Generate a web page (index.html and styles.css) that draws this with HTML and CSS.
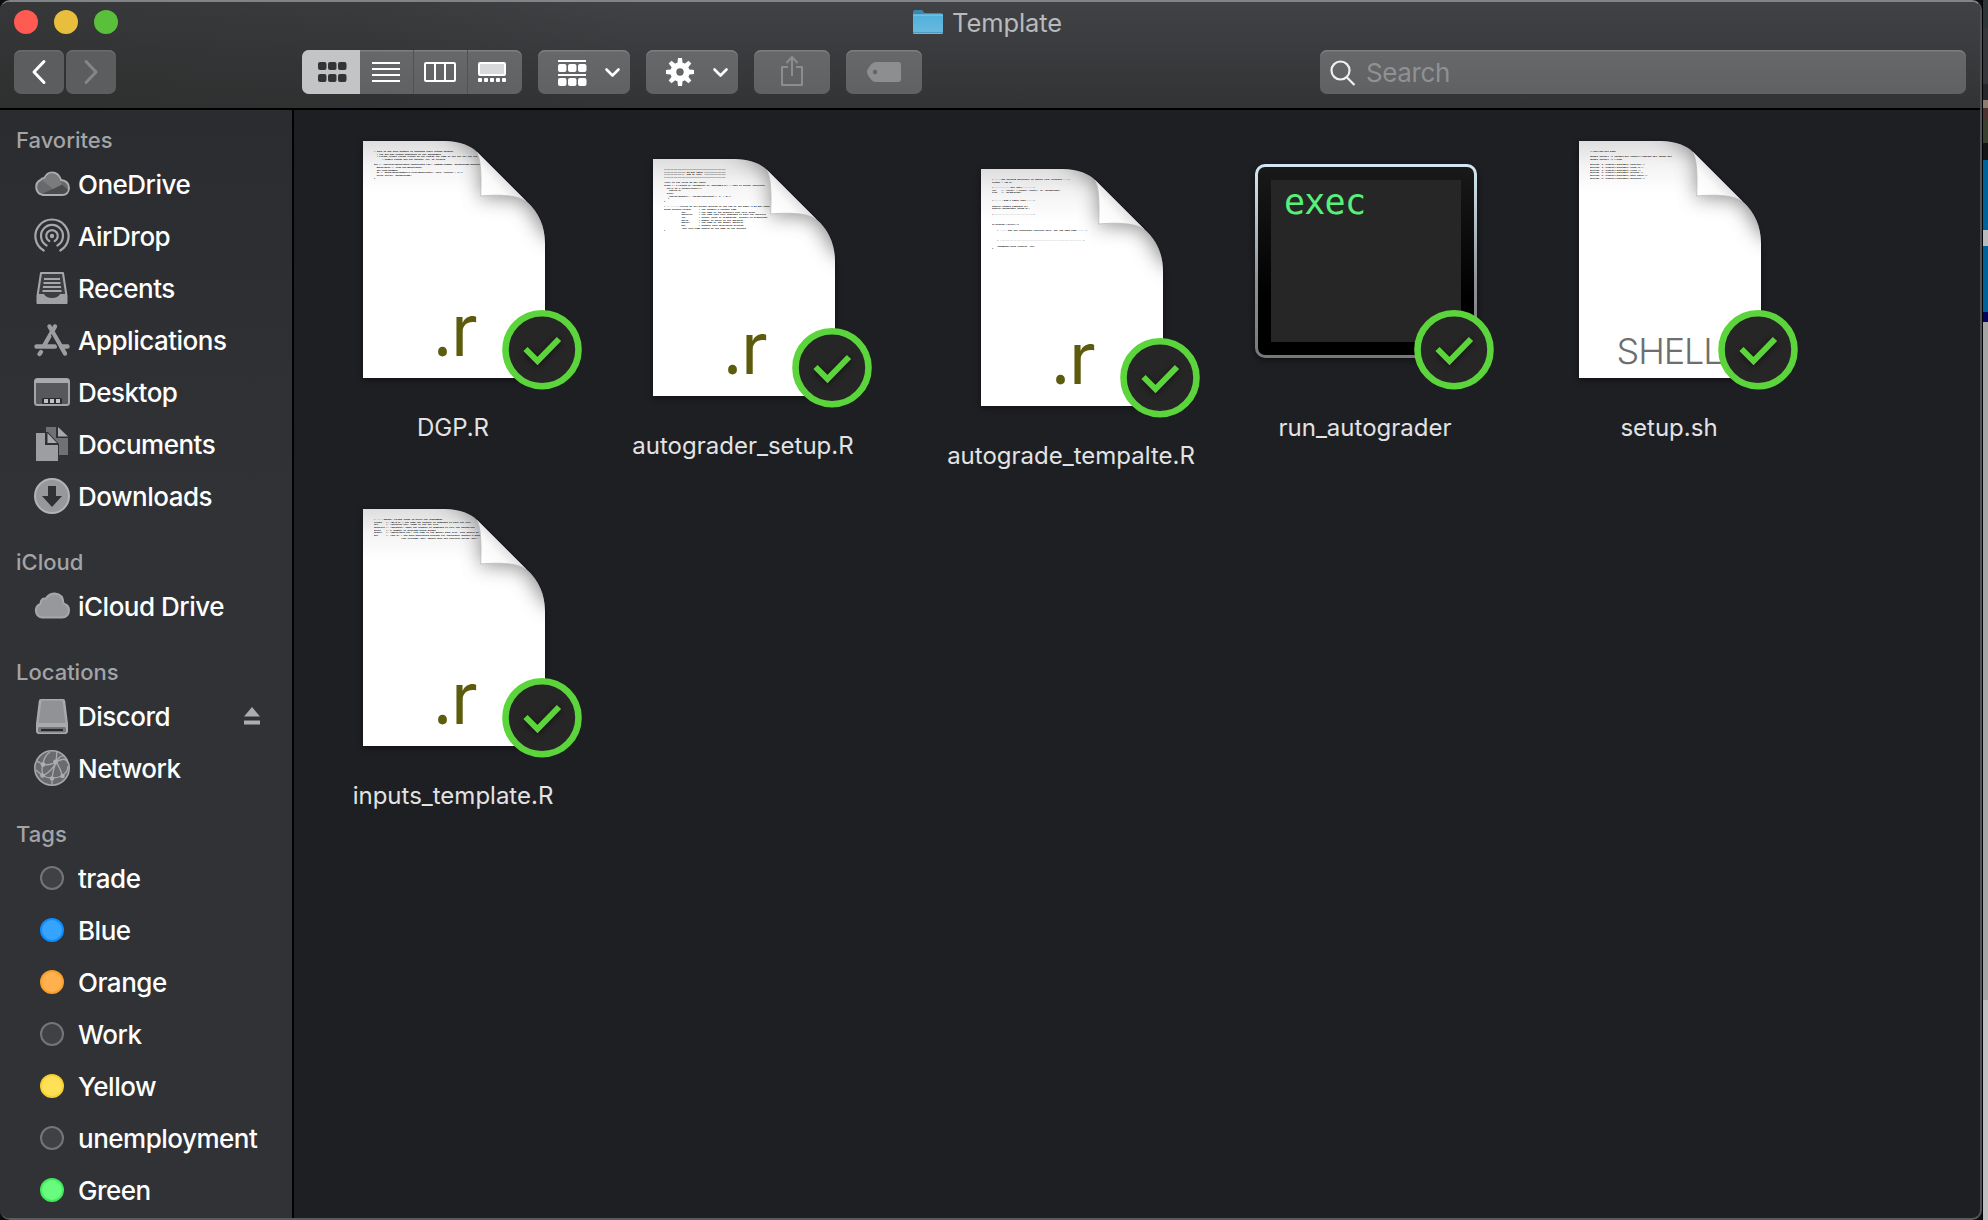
FILE: index.html
```html
<!DOCTYPE html>
<html lang="en">
<head>
<meta charset="utf-8">
<title>Template</title>
<link rel="stylesheet" href="styles.css">
</head>
<body>
<svg class="defs" width="0" height="0" aria-hidden="true">
  <defs>
    <linearGradient id="flap" gradientUnits="userSpaceOnUse" x1="158" y1="62" x2="180" y2="42">
      <stop offset="0" stop-color="#fff"/><stop offset=".55" stop-color="#fafafa"/><stop offset="1" stop-color="#dcdcdc"/>
    </linearGradient>
    <linearGradient id="topshade" x1="0" y1="0" x2="0" y2="1">
      <stop offset="0" stop-color="#dedede"/><stop offset=".1" stop-color="#f3f3f3"/><stop offset=".22" stop-color="#fff"/>
    </linearGradient>
    <linearGradient id="bezel" x1="0" y1="0" x2="0" y2="1">
      <stop offset="0" stop-color="#d3e8f2"/><stop offset=".15" stop-color="#c3d6e0"/><stop offset=".6" stop-color="#8f9396"/><stop offset="1" stop-color="#777"/>
    </linearGradient>
    <linearGradient id="glass" x1="0" y1="0" x2="0" y2="1">
      <stop offset="0" stop-color="#191919"/><stop offset=".7" stop-color="#000"/>
    </linearGradient>
    <linearGradient id="folder" x1="0" y1="0" x2="0" y2="1">
      <stop offset="0" stop-color="#4fb0dc"/><stop offset="1" stop-color="#6cbbdc"/>
    </linearGradient>
    <filter id="soft" x="-50%" y="-50%" width="200%" height="200%"><feGaussianBlur stdDeviation="10"/></filter>
    <filter id="soft3" x="-50%" y="-50%" width="200%" height="200%"><feGaussianBlur stdDeviation="3"/></filter>
    <clipPath id="sheet"><path d="M39 9H121C136 9 147 14 153 20C158 30 157 50 156.700 64C180 62 194 64 202 69C215 80 221 95 221 111V246H39Z"/></clipPath>
    <symbol id="page" viewBox="0 0 260 260">
      <path d="M39 11H121L153 22L202 71L221 111V248H39Z" fill="#000" opacity=".45" filter="url(#soft3)"/>
      <path d="M39 9H121C136 9 147 14 153 20L202 69C215 80 221 95 221 111V246H39Z" fill="url(#topshade)"/>
      <g clip-path="url(#sheet)">
        <path d="M120 0L153 20C158 30 157 50 156.700 66C180 64 194 66 202 71L222 104L240 110L240 0Z" fill="#666" opacity=".75" filter="url(#soft)"/>
      </g>
      <path d="M153 20C158 30 157 50 156.700 64C180 62 194 64 202 69Z" fill="url(#flap)"/>
      <path d="M153 20C158 30 157 50 156.700 64C180 62 194 64 202 69" fill="none" stroke="#b5b5b5" stroke-width=".8"/>
    </symbol>
    <symbol id="synced" viewBox="0 0 260 260">
      <circle cx="218" cy="217.700" r="36.500" fill="#262626" stroke="#5cd43c" stroke-width="6.600"/>
      <path d="M202 219.500L213.500 230.500L235 208" fill="none" stroke="#000" stroke-width="6" opacity=".5" filter="url(#soft3)"/>
      <path d="M201.500 217L213.500 229L235 207" fill="none" stroke="#5cd43c" stroke-width="6"/>
    </symbol>
  </defs>
</svg>

<div class="desktop">
<div class="window">
  <header class="chrome">
    <div class="titlebar">
      <div class="lights"><i class="light close"></i><i class="light minimize"></i><i class="light zoom"></i></div>
      <div class="title">
        <svg width="30" height="24" viewBox="0 0 30 24"><path d="M0 2Q0 0 2 0H9L11.500 3H28Q30 3 30 5V12H0Z" fill="#3d87ab"/><rect y="4.500" width="30" height="19.500" rx="1" fill="url(#folder)"/><path d="M0 5H30" stroke="#7fd0f0"/><path d="M0 22.500H30" stroke="#4b9cc0"/></svg>
        <h1>Template</h1>
      </div>
    </div>
    <div class="toolbar">
      <button class="btn back"><svg width="50" height="44" fill="none" stroke="#fff" stroke-width="3" stroke-linecap="round" stroke-linejoin="round"><path d="M30 11.500L20 22L30 32.500"/></svg></button>
      <button class="btn forward"><svg width="50" height="44" fill="none" stroke="#858688" stroke-width="3" stroke-linecap="round" stroke-linejoin="round"><path d="M20 11.500L30 22L20 32.500"/></svg></button>
      <div class="segments">
        <button class="seg active"><svg width="58" height="44" fill="#333436"><rect x="16" y="12" width="8.500" height="8" rx="2"/><rect x="26" y="12" width="8.500" height="8" rx="2"/><rect x="36" y="12" width="8.500" height="8" rx="2"/><rect x="16" y="24" width="8.500" height="8" rx="2"/><rect x="26" y="24" width="8.500" height="8" rx="2"/><rect x="36" y="24" width="8.500" height="8" rx="2"/></svg></button>
        <button class="seg list"><svg width="53" height="44" stroke="#fff" stroke-width="2"><path d="M12 13H40M12 19H40M12 25H40M12 31H40"/></svg></button>
        <button class="seg"><svg width="54" height="44" fill="none" stroke="#fff" stroke-width="2"><rect x="12" y="13" width="30" height="18" rx="1"/><path d="M22 13V31M32 13V31"/></svg></button>
        <button class="seg"><svg width="54" height="44" fill="#fff"><rect x="12" y="13" width="26" height="12" rx="1" fill="#d8d9da" stroke="#fff" stroke-width="2"/><rect x="11" y="28" width="4" height="4" rx="1"/><rect x="17" y="28" width="4" height="4" rx="1"/><rect x="23" y="28" width="4" height="4" rx="1"/><rect x="29" y="28" width="4" height="4" rx="1"/><rect x="35" y="28" width="4" height="4" rx="1"/></svg></button>
      </div>
      <button class="btn menu"><svg width="92" height="44" fill="#fff"><rect x="20" y="10" width="28" height="2"/><rect x="20" y="14" width="8.500" height="8" rx="2"/><rect x="30" y="14" width="8.500" height="8" rx="2"/><rect x="40" y="14" width="8.500" height="8" rx="2"/><rect x="20" y="24" width="28" height="2"/><rect x="20" y="28" width="8.500" height="8" rx="2"/><rect x="30" y="28" width="8.500" height="8" rx="2"/><rect x="40" y="28" width="8.500" height="8" rx="2"/><path d="M68.500 19.500L74.500 25.500L80.500 19.500" fill="none" stroke="#fff" stroke-width="2.600" stroke-linecap="round" stroke-linejoin="round"/></svg></button>
      <button class="btn menu"><svg width="92" height="44"><g fill="#fff" transform="translate(34 22)"><path d="M-2 -14H2L2.700 -8H-2.700Z"/><path d="M-2 -14H2L2.700 -8H-2.700Z" transform="rotate(45)"/><path d="M-2 -14H2L2.700 -8H-2.700Z" transform="rotate(90)"/><path d="M-2 -14H2L2.700 -8H-2.700Z" transform="rotate(135)"/><path d="M-2 -14H2L2.700 -8H-2.700Z" transform="rotate(180)"/><path d="M-2 -14H2L2.700 -8H-2.700Z" transform="rotate(225)"/><path d="M-2 -14H2L2.700 -8H-2.700Z" transform="rotate(270)"/><path d="M-2 -14H2L2.700 -8H-2.700Z" transform="rotate(315)"/><circle r="6.700" fill="none" stroke="#fff" stroke-width="6"/></g><path d="M68.500 19.500L74.500 25.500L80.500 19.500" fill="none" stroke="#fff" stroke-width="2.600" stroke-linecap="round" stroke-linejoin="round"/></svg></button>
      <button class="btn share"><svg width="76" height="44" fill="none" stroke="#8c8d8f" stroke-width="2"><path d="M34 17H28V35H48V17H42" stroke-linejoin="round"/><path d="M38 26V7.500M32.500 13L38 7L43.500 13"/></svg></button>
      <button class="btn tag"><svg width="76" height="44"><path fill="#8d8e90" fill-rule="evenodd" d="M30 12H52Q55 12 55 15V29Q55 32 52 32H30Q27 32 25 29.500L21.800 25Q20 22 21.800 19L25 14.500Q27 12 30 12ZM29 19.800A2.200 2.200 0 1 0 29 24.200A2.200 2.200 0 1 0 29 19.800Z"/></svg></button>
      <div class="search">
        <svg width="26" height="26" fill="none" stroke="#f0f0f0" stroke-width="2.200"><circle cx="10.500" cy="10.500" r="9"/><path d="M17 17.500L24.500 25"/></svg>
        <span>Search</span>
      </div>
    </div>
  </header>

  <div class="body">
    <nav class="sidebar">
      <h2>Favorites</h2>
      <ul>
        <li><svg class="ico" viewBox="0 0 36 36"><path d="M9 29A8 8 0 0 1 6.500 14Q8 12 10.500 12Q13 6.500 18 6.500Q24.500 6.500 27 14Q35 15 35 22Q34.500 29 28 29Z" fill="#68696b" stroke="#abacae" stroke-width="2"/><path d="M8 28L28 18.500L34 24Q32 28 28 28Z" fill="#4b4c4f"/><path d="M8 14L19 23L28 18.500L26 14Q24 7.500 18 7.500Q13 7.500 11 13Z" fill="#7a7b7d"/></svg>OneDrive</li>
        <li><svg class="ico" viewBox="0 0 36 36" fill="none" stroke="#a6a7aa" stroke-width="2.200" stroke-linecap="round"><circle cx="18" cy="18" r="2.200" fill="#a6a7aa" stroke="none"/><path d="M15.300 23A5.800 5.800 0 1 1 20.700 23"/><path d="M12.600 27.500A11 11 0 1 1 23.400 27.500"/><path d="M9.700 32.500A16.600 16.600 0 1 1 26.300 32.500"/></svg>AirDrop</li>
        <li><svg class="ico" viewBox="0 0 36 36"><path d="M7 3H29L32.500 26V33H3.500V26Z" fill="#3d3e41" stroke="#a6a7aa" stroke-width="2" stroke-linejoin="round"/><path d="M3 24H10Q12 28 18 28T26 24H33V32Q33 34 31 34H5Q3 34 3 32Z" fill="#a0a1a5"/><path d="M10 9H26M9.500 13H26.500M9 17H27M8.500 21H27.500" stroke="#a6a7aa" stroke-width="1.800"/></svg>Recents</li>
        <li><svg class="ico" viewBox="0 0 36 36" fill="none" stroke="#9c9da1" stroke-width="4.400" stroke-linecap="round"><path d="M21 4.500L10.500 23M15.500 4.500L31 31.500"/><path d="M2.500 24.500H21M28.500 24.500H33.500"/><path d="M7 30L5.500 32"/><path d="M17.500 13L24 25" stroke="#303134" stroke-width="1.200"/></svg>Applications</li>
        <li><svg class="ico" viewBox="0 0 36 36"><rect x="1" y="5" width="34" height="26" rx="2.500" fill="#57585b" stroke="#a3a4a7" stroke-width="2"/><path d="M1 5H35V9H1Z" fill="#a9aaad"/><rect x="8" y="24" width="20" height="6" rx="1" fill="#2b2c2e"/><path d="M10 25H14V29H10ZM16 25H20V29H16ZM22 25H26V29H22Z" fill="#c0c1c3"/></svg>Desktop</li>
        <li><svg class="ico" viewBox="0 0 36 36"><path d="M12 1H22V12H34V29H25V18L14 6H12Z" fill="#707174"/><path d="M24 1L34 10.500H24Z" fill="#a9aaad"/><path d="M2 7H11V19H24V35H2Z" fill="#9d9ea2"/><path d="M13.500 7L23 17H13.500Z" fill="#a9aaad"/></svg>Documents</li>
        <li><svg class="ico" viewBox="0 0 36 36"><circle cx="18" cy="18" r="17" fill="#97989b" stroke="#b2b3b5" stroke-width="2"/><path d="M14 8H22V18H28L18 29L8 18H14Z" fill="#303134"/></svg>Downloads</li>
      </ul>
      <h2>iCloud</h2>
      <ul>
        <li><svg class="ico" viewBox="0 0 36 36"><path d="M8 29.500A7 7 0 0 1 6.500 16Q6.500 10 12 10.500Q15 5.500 21 5.500Q29 6 29.500 15.500Q35 17 35 22.500Q34.500 29.500 28 29.500Z" fill="#97989b" stroke="#a6a7aa" stroke-width="2"/></svg>iCloud Drive</li>
      </ul>
      <h2>Locations</h2>
      <ul>
        <li><svg class="ico" viewBox="0 0 36 36"><path d="M7 1H29Q31 1 31.200 3L34 26V33Q34 36 31 36H5Q2 36 2 33V26L4.800 3Q5 1 7 1Z" fill="#a9aaad"/><path d="M7.500 2.500H28.500L31.500 25H4.500Z" fill="#919296"/><rect x="4" y="29" width="28" height="5.500" rx="1.500" fill="#77787b"/><path d="M7 32H29" stroke="#28292b" stroke-width="2.200"/></svg>Discord<svg class="eject" viewBox="0 0 16 18"><path d="M8 0L16 9.500H0ZM0 13.500H16V17.500H0Z" fill="#acadaf"/></svg></li>
        <li><svg class="ico" viewBox="0 0 36 36"><circle cx="18" cy="18" r="17.200" fill="#6a6b6e" stroke="#a6a7aa" stroke-width="1.600"/><g fill="none" stroke="#a9aaad" stroke-width="1.300"><path d="M3 11Q12 18 22 12T34 13M22 12L23 1M9 14Q10 6 16 2M9 14Q7 20 9 26Q18 30 28 26Q27 19 22 12Q19 20 9 26M18 28V35M2 20L9 26M28 26Q34 22 34 16M18 28Q19 20 22 12Q26 5 30 6"/></g><g fill="#acadaf"><circle cx="9" cy="14.500" r="2.400"/><circle cx="21.500" cy="12" r="2.400"/><circle cx="8.500" cy="25.500" r="2.200"/><circle cx="18" cy="28.500" r="2.200"/><circle cx="28.500" cy="26" r="2.200"/></g></svg>Network</li>
      </ul>
      <h2>Tags</h2>
      <ul>
        <li><i class="dot"></i>trade</li>
        <li><i class="dot blue"></i>Blue</li>
        <li><i class="dot orange"></i>Orange</li>
        <li><i class="dot"></i>Work</li>
        <li><i class="dot yellow"></i>Yellow</li>
        <li><i class="dot"></i>unemployment</li>
        <li><i class="dot green"></i>Green</li>
      </ul>
    </nav>

    <main class="files">
      <figure class="file">
        <div class="icon">
          <svg width="260" height="260"><use href="#page"/><text class="ext-r" y="224"><tspan class="point" x="109">.</tspan><tspan x="127">r</tspan></text></svg>
<pre class="preview"># This is how each student is assigned their unique dataset
  # The DGP may change depending on the assignment
  # Please Please Please Please do not change the name of the DGP nor the inp
      # Simply change how the dataset "df" is created

DGP &lt;- function(masterdata="Masterdata.csv", SIMNID=FORMID, datasetname=dataset
  masterdata &lt;- read.csv(masterdata)
  set.seed(SIMNID)
  df &lt;- masterdata[sample(1:nrow(masterdata), 1000, replace = T),]
  write.csv(df, datasetname)
}</pre>
          <svg class="badge" width="260" height="260"><use href="#synced"/></svg>
        </div>
        <figcaption>DGP.R</figcaption>
      </figure>

      <figure class="file drop-s">
        <div class="icon">
          <svg width="260" height="260"><use href="#page"/><text class="ext-r" y="224"><tspan class="point" x="109">.</tspan><tspan x="127">r</tspan></text></svg>
<pre class="preview">##############################################
################ DO NOT TOUCH ################
###############  END OF FILE  ################
##############################################

#Call in the files DO NOT TOUCH
Tests &lt;- c("setup.R","DGPmaster.R","packages.R") # List of helper functions
  for(i in 1:length(Tests)){
    source(i)
  else{
    source(paste0("../helperfunctions/", i, ".R"))
   }
}

# ----------Follow an all preset defined at the top of the page! I DO NOT TOUCH-
setup.default(format,     # The student's formats name
             key,         # The name of the possible they were given
             datafile,    # The name they were supposed to give the datafile
             loc,         # Either local or gradescope, default is gradescope
             parts,       # Number of parts to the question
             master,      # The name of the master datafile
             DGP          # Student data generating process,
             #The file name should be the same as the process
}</pre>
          <svg class="badge" width="260" height="260"><use href="#synced"/></svg>
        </div>
        <figcaption>autograder_setup.R</figcaption>
      </figure>

      <figure class="file drop-m">
        <div class="icon">
          <svg width="260" height="260"><use href="#page"/><text class="ext-r" y="224"><tspan class="point" x="109">.</tspan><tspan x="127">r</tspan></text></svg>
<pre class="preview"># -----Set working directory to source file location-----#
format = "Q1.R"

#-------------DGP TEST---------#
loc    &lt;- "local" # either "local", or "gradescope"
Ploc   &lt;- "gradescope"


#--------DON'T TOUCH THIS------#

source("inputs_template.R")
source("autograder_setup.R")

#------------------------------#



if(status=="Error"){

    # ----- Run the Autograder Function here, the ADD CODE HERE ----- #



    # ------------------------------------------------------------- #

    JSONmaker(test.results, loc)
}</pre>
          <svg class="badge" width="260" height="260"><use href="#synced"/></svg>
        </div>
        <figcaption>autograde_tempalte.R</figcaption>
      </figure>

      <figure class="file">
        <div class="icon">
          <svg width="260" height="260">
            <rect x="19" y="34" width="222" height="194" rx="10" fill="#000" opacity=".5" filter="url(#soft3)"/>
            <rect x="19" y="32" width="222" height="194" rx="10" fill="url(#bezel)"/>
            <rect x="22" y="35" width="216" height="188" rx="7" fill="url(#glass)"/>
            <rect x="35" y="48" width="190" height="162" fill="#262626"/>
            <text class="exec" x="48" y="82" textLength="82">exec</text>
          </svg>
          <svg class="badge" width="260" height="260"><use href="#synced"/></svg>
        </div>
        <figcaption>run_autograder</figcaption>
      </figure>

      <figure class="file">
        <div class="icon">
          <svg width="260" height="260"><use href="#page"/><text class="ext-shell" x="76.500" y="232" textLength="107">SHELL</text></svg>
<pre class="preview">#!/usr/bin/env bash

aptget install -y libxml2-dev libcurl4-openssl-dev libssl-dev
aptget install -y r-base

Rscript -e "install.packages('jsonlite')"
Rscript -e "install.packages('readr.R')"
Rscript -e "install.packages('rlist')"
Rscript -e "install.packages('stringr')"
Rscript -e "install.packages('data.table')"
Rscript -e "install.packages('devtools')"</pre>
          <svg class="badge" width="260" height="260"><use href="#synced"/></svg>
        </div>
        <figcaption>setup.sh</figcaption>
      </figure>

      <figure class="file">
        <div class="icon">
          <svg width="260" height="260"><use href="#page"/><text class="ext-r" y="224"><tspan class="point" x="109">.</tspan><tspan x="127">r</tspan></text></svg>
<pre class="preview"># ---- Inputs: CHANGE THESE TO MATCH THE ASSIGNMENT
format   &lt;- "Q1/Q.R" # The name the student is supposed to save the file
key      &lt;- "Solution.csv" #Name of the key file
datafile &lt;- "dataset1" #What the student is supposed to call the dataseries
parts    &lt;- 3 #Number of problems being graded
Master   &lt;- "Masterdata.csv" #The name of the master data file. This should be
DGP      &lt;- "DGP.R" # The data generating process for individual student's data
                    #The filename "DGP" should have one function called "DGP".</pre>
          <svg class="badge" width="260" height="260"><use href="#synced"/></svg>
        </div>
        <figcaption>inputs_template.R</figcaption>
      </figure>
    </main>
  </div>
</div>
<div class="behind"></div>
</div>
</body>
</html>
```
FILE: styles.css
```css
* { box-sizing: border-box; margin: 0; padding: 0; }

body {
  background: #0c0d0e;
  font-family: Inter, "Liberation Sans", sans-serif;
  overflow: hidden;
}

.defs { position: absolute; }

.desktop {
  display: grid;
  grid-template-columns: 1982px 6px;
  height: 1220px;
}

.window {
  display: flex;
  flex-direction: column;
  height: 1220px;
  border-top: 2px solid #818486;
  border-right: 2px solid #505255;
  border-bottom: 2px solid #5a5b5e;
  border-radius: 10px;
  overflow: hidden;
  background: #1e1f23;
}

.behind {
  border-left: 1px solid #000;
  background: linear-gradient(#2d3536 0 28px, #35373b 28px 84px, #25272a 84px 100px, #8b7d70 100px 108px, #4b3330 108px 120px, #39402f 120px 143px, #141516 143px 160px, #00629b 160px 230px, #b9bcbe 230px 246px, #00629b 246px 312px, #04045e 312px 322px, #a5a5a5 322px 1000px, #c0c0c0 1000px);
}

/* title bar and toolbar */
.chrome {
  flex: none;
  height: 108px;
  border-bottom: 2px solid #000;
  background: linear-gradient(90deg, rgba(42, 42, 40, .45), rgba(42, 42, 40, .3) 18%, rgba(42, 42, 40, 0) 32%), linear-gradient(#404245, #323335);
}

.titlebar {
  display: grid;
  grid-template-columns: 1fr auto 1fr;
  align-items: center;
  height: 40px;
  padding-right: 5px;
}

.lights { display: flex; gap: 16px; padding-left: 14px; }
.light { width: 24px; height: 24px; border-radius: 50%; }
.close { background: #ff5b52; }
.minimize { background: #e8be3c; }
.zoom { background: #5ac03c; }

.title { display: flex; align-items: center; gap: 9px; }
.title h1 {
  padding-top: 1px;
  font-size: 25.500px;
  font-weight: 400;
  color: #b9babc;
  line-height: 30px;
  letter-spacing: -.1px;
}

.toolbar { display: flex; margin-top: 8px; padding: 0 14px; }

.btn, .segments, .search {
  height: 44px;
  border: 0;
  border-radius: 7px;
  background: linear-gradient(#66686a, #606163);
  box-shadow: inset 0 1.500px 0 #7c7e80;
}
.btn svg, .seg svg { display: block; }
.btn { margin-right: 16px; }
.back { margin-right: 2px; }
.forward { margin-right: 186px; }
.back, .forward { background: #5c5d5f; box-shadow: inset 0 1.500px 0 #6a6b6d; }

.segments { display: flex; width: 220px; margin-right: 16px; overflow: hidden; }
.seg { width: 54px; border: 0; background: none; border-left: 1px solid #515255; }
.seg svg { margin-left: -1px; }
.seg.active { width: 58px; border: 0; background: #c3c4c6; }
.seg.active svg { margin: 0; }
.seg.list { width: 53px; border-color: transparent; }

.search {
  display: flex;
  align-items: center;
  gap: 10px;
  width: 646px;
  margin-left: auto;
  padding-left: 10px;
  font-size: 26px;
  color: #8f9193;
  letter-spacing: -.4px;
}
.search svg { margin-top: 2px; }
.search span { padding-top: 1px; }

.body { flex: 1; display: flex; min-height: 0; }

/* sidebar */
.sidebar {
  flex: none;
  width: 294px;
  border-right: 2px solid #000;
  background: linear-gradient(#2b2c2f, #303236 35%, #313236);
  overflow: hidden;
}
.sidebar h2 {
  display: flex;
  align-items: flex-end;
  height: 58px;
  padding: 0 0 4px 16px;
  font-size: 22px;
  line-height: 28px;
  font-weight: 500;
  color: #a3a4a6;
}
.sidebar h2:first-child { height: 48px; }
.sidebar ul { list-style: none; }
.sidebar li {
  display: flex;
  align-items: center;
  gap: 8px;
  height: 52px;
  padding-left: 34px;
  font-size: 26px;
  font-weight: 500;
  color: #fff;
  letter-spacing: -.5px;
}
.ico { width: 36px; height: 36px; flex: none; }
.eject { width: 16px; height: 18px; margin: 0 32px 0 auto; }

.dot {
  width: 24px;
  height: 24px;
  margin: 0 6px;
  border: 2px solid #747578;
  border-radius: 50%;
  background: #404144;
}
.blue { background: #36a4ff; border-color: #0e8dfd; }
.orange { background: #ffb04f; border-color: #f99f2b; }
.yellow { background: #ffe057; border-color: #f6d12f; }
.green { background: #68fb7e; border-color: #40ea5c; }

/* icon view */
.files {
  flex: 1;
  display: grid;
  grid-template-columns: 290px 290px 366px 222px 386px;
  grid-template-rows: 368px 368px;
  padding: 22px 0 0 15px;
}
.file { display: flex; flex-direction: column; align-items: center; }
.drop-s { margin-top: 18px; }
.drop-m { margin-top: 28px; }

.icon { position: relative; flex: none; width: 260px; height: 260px; }
.icon svg { display: block; }
.icon .badge { position: absolute; inset: 0; }

.ext-r { font: 71px Inter, sans-serif; fill: #5d5b0e; }
.point { font-family: "Noto Sans", sans-serif; }
.ext-shell { font: 300 36px Inter, sans-serif; fill: #6e6e6e; }
.exec { font: 35px "DejaVu Sans Mono", monospace; fill: #56f07a; }

.preview {
  position: absolute;
  left: 50px;
  top: 19px;
  width: 106px;
  overflow: hidden;
  font: bold 2.240px/2.670px "Liberation Mono", monospace;
  color: #000;
}

.file figcaption {
  margin: 20px 2px 0 0;
  font-size: 24px;
  line-height: 32px;
  color: #e2e3e4;
  white-space: nowrap;
}
```
